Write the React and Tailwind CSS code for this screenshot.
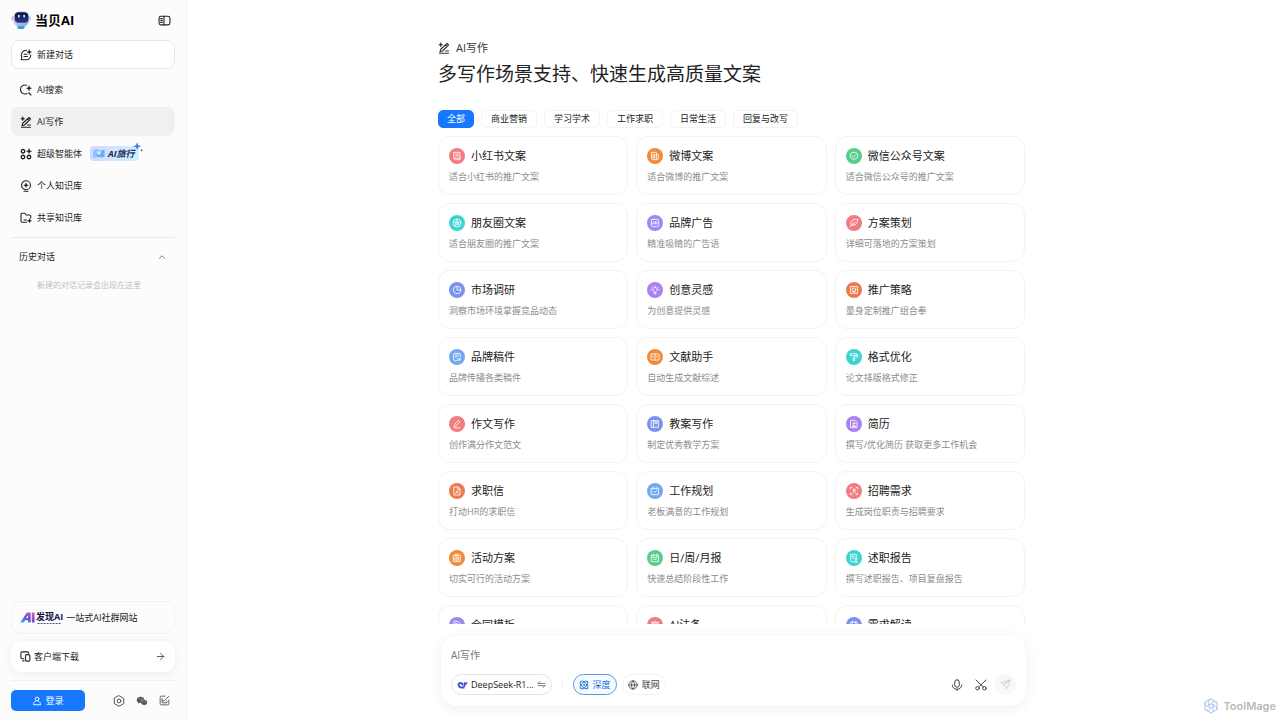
import React, { useState } from 'react';
import { ArrowRight, ChevronUp, Globe } from 'lucide-react';
import { AiFillWechat } from 'react-icons/ai';

const Svg = ({ className, children, width = 1.6 }) => (
  <svg
    viewBox="0 0 24 24"
    className={className}
    fill="none"
    stroke="currentColor"
    strokeWidth={width}
    strokeLinecap="round"
    strokeLinejoin="round"
    aria-hidden="true"
  >
    {children}
  </svg>
);

const ChatIcon = () => (
  <Svg className="size-3 shrink-0" width={2.2}>
    <path d="M13 2.5A9.6 9.6 0 0 0 3.6 16L2.5 21.5h9.8A9.4 9.4 0 0 0 21.5 12" />
    <path d="M8 10.5h6M8 15h7" />
    <path d="M18.5 1l1.6 3.6L23.5 6l-3.4 1.4-1.6 3.6-1.600-3.600L13.500 6l3.400-1.400z" fill="currentColor" strokeWidth="0.5" />
  </Svg>
);

const SearchIcon = () => (
  <Svg className="size-3 shrink-0" width={2.2}>
    <path d="M13 2.500a9 9 0 1 0 1 16.500M17.500 17.500l4.500 4.500" />
    <path d="M18 3l1.600 3.900L23.500 8.500l-3.900 1.600L18 14l-1.600-3.900-3.900-1.600 3.900-1.600z" fill="currentColor" strokeWidth="0.5" />
  </Svg>
);

const WriteIcon = () => (
  <Svg className="size-3 shrink-0" width={2.2}>
    <path d="M18 3l3 3L9 18l-5 1.500L5.500 14.500zM15 6l3 3M3 22.500h18M15 18h6" />
    <path d="M5.500 1l1.400 3.100L10 5.500 6.900 6.900 5.500 10 4.100 6.900 1 5.500l3.100-1.400z" fill="currentColor" strokeWidth="0.5" />
  </Svg>
);

const AgentIcon = () => (
  <Svg className="size-3 shrink-0" width={2.6}>
    <circle cx="6" cy="6.500" r="3.500" />
    <circle cx="6" cy="18" r="3.500" />
    <circle cx="18" cy="18" r="3.500" />
    <path d="M18 1l1.700 3.800 3.800 1.700-3.800 1.700L18 12l-1.700-3.800-3.800-1.700 3.800-1.700z" fill="currentColor" strokeWidth="0.5" />
  </Svg>
);

const PersonalIcon = () => (
  <Svg className="size-3 shrink-0" width={2.2}>
    <circle cx="12" cy="10.500" r="9" />
    <path d="M8 22.500h8" />
    <path d="M12 5.500l1.500 3.500 3.500 1.500-3.500 1.500L12 15.500 10.500 12 7 10.500 10.500 9z" fill="currentColor" strokeWidth="0.5" />
  </Svg>
);

const SharedIcon = () => (
  <Svg className="size-3 shrink-0" width={2.2}>
    <path d="M13 20.500H4.500a2.500 2.500 0 0 1-2.500-2.500V5a2.500 2.500 0 0 1 2.500-2.500h5l3 3.500H19a2.500 2.500 0 0 1 2.500 2.500V12M8 16h5" />
    <path d="M19 13l1.300 3.200 3.200 1.300-3.200 1.300L19 22l-1.300-3.200-3.200-1.300 3.200-1.300z" fill="currentColor" strokeWidth="0.5" />
  </Svg>
);

const RobotLogo = () => (
  <svg viewBox="0 0 60 54" className="h-[18px] w-5 shrink-0" aria-hidden="true">
    <defs>
      <linearGradient id="shell" x1="0" y1="0" x2="1" y2="1">
        <stop offset="0" stopColor="#e3e7f6" />
        <stop offset="1" stopColor="#929dca" />
      </linearGradient>
      <linearGradient id="visor" x1="0" y1="0" x2="0" y2="1">
        <stop offset="0" stopColor="#0d1644" />
        <stop offset="1" stopColor="#22398c" />
      </linearGradient>
    </defs>
    <path d="M14 38h34l-6 12q-11 6-22 0z" fill="#c7d0ea" />
    <path d="M18 47q12-6 24 0l-4 7H22z" fill="#2ea6dc" />
    <ellipse cx="5" cy="22" rx="4" ry="7" fill="#b9c1de" />
    <ellipse cx="56" cy="22" rx="4" ry="7" fill="#c9cfe6" />
    <rect x="6" y="1" width="49" height="44" rx="19" fill="url(#shell)" />
    <rect x="11" y="4" width="41" height="31" rx="12" fill="url(#visor)" />
    <rect x="21" y="11" width="5" height="9" rx="2.500" fill="#e9f2ff" />
    <rect x="37" y="11" width="5" height="9" rx="2.500" fill="#e9f2ff" />
  </svg>
);

const WhaleIcon = () => (
  <svg viewBox="0 0 32 24" className="h-2 w-[11px] shrink-0" aria-hidden="true">
    <path
      d="M1 10C1 5 6 2 11 3c4 .6 6 3 9 5 1-1 .6-4 1.500-6 1.500 2 3 3 5 2.500C28 4 29.500 3 31 3c0 5-2 8-5.500 9-.5 4-2.500 6.500-4.500 8l2 2c-4 1.500-8 .5-11 .5C5 22 1 17 1 10z"
      fill="#4358dc"
    />
    <path d="M7 9c4-1 8 4 11 8-5 1-11-2-11-8z" fill="#fff" />
    <circle cx="19" cy="12.500" r="1.800" fill="#fff" />
  </svg>
);

const glyphs = {
  note: <path d="M7.500 6.500h9v11h-8a1.500 1.500 0 0 1-1-1.500zM7.500 15h9M10 9.200h4M10 11.700h4" />,
  news: <path d="M7 6.500h7v11H8.500A1.500 1.500 0 0 1 7 16zM14 10h3v6a1.500 1.500 0 0 1-3 0M9.500 9.500h2v5.500h-2z" />,
  verified: (
    <>
      <path d="M12 6l1.700 1.200 2.100-.1.600 2 1.600 1.300-.7 2 .1 2-2 .8-1.200 1.700-2.200-.6-2.200.6-1.200-1.700-2-.8.100-2-.7-2 1.600-1.300.6-2 2.100.1z" />
      <path d="M9.700 12l1.700 1.600 3-3.100" />
    </>
  ),
  aperture: (
    <>
      <circle cx="12" cy="12" r="5.800" />
      <circle cx="12" cy="12" r="2" />
      <path d="M12 10V6.200M13.900 11.400l3.500-1.500M13.200 13.600l2.300 3M10.800 13.600l-2.300 3M10.100 11.400L6.600 9.900" />
    </>
  ),
  ad: (
    <>
      <rect x="6.500" y="6.500" width="11" height="11" rx="1.500" />
      <path d="M8.500 13.500l1.400-3.300 1.400 3.300M13 10.200v3.300h.8c2.300 0 2.300-3.300 0-3.300z" />
    </>
  ),
  leaf: <path d="M17.500 7c-5-1.500-10 .5-10.500 4.500-.2 2 .5 3.500 2 4C14 16.500 17.500 12 17.500 7zM6.500 17.500c2-3 4-5 7-6.500M10 13.500l3.500.5" />,
  pie: (
    <>
      <circle cx="12" cy="12" r="5.500" />
      <path d="M12 6.500V12h5.500" />
    </>
  ),
  bulb: <path d="M10.500 15.500v-1.300a3.200 3.200 0 1 1 3 0v1.300zM10.800 17.800h2.400M12 6.500V5.800M7 11.500H5.800M18.200 11.500H17M8.300 8.200l-.8-.7M15.700 8.200l.8-.7" />,
  target: (
    <>
      <path d="M9 17.200H6.800V6.800h10.400v10.400H15" />
      <circle cx="12" cy="11.500" r="2.600" />
      <path d="M10.600 14v3.200h2.800V14" />
    </>
  ),
  draft: (
    <>
      <path d="M11.500 17.500H8.500a1.500 1.500 0 0 1-1.500-1.500V8a1.500 1.500 0 0 1 1.500-1.500h7A1.500 1.500 0 0 1 17 8v4M9.500 9.200h5M9.500 11.700h2.500" />
      <circle cx="14.800" cy="15.500" r="1.800" />
    </>
  ),
  book: <path d="M12 7.500v9M7 7.500h10a1 1 0 0 1 1 1v7a1 1 0 0 1-1 1h-4l-1 .8-1-.8H7a1 1 0 0 1-1-1v-7a1 1 0 0 1 1-1zM8.300 11.500h1.500M14.200 11.500h1.500" />,
  roller: <path d="M7 7h8.500v3H7zM15.500 8.300h2V12H12v2M11.200 14h1.700v3.500h-1.700z" />,
  pen: <path d="M14.500 6.800l2 2-6 6.200-2.700.7.700-2.700zM7.500 17.700h9" />,
  plan: <path d="M7 7h10v10H7zM9.700 7v10M12 7v4.500l1.500-1 1.500 1V7" />,
  resume: (
    <>
      <path d="M7.500 6.500h6l3 3v8h-9z" />
      <circle cx="12" cy="11" r="1.300" />
      <path d="M9.700 15c.5-2 4-2 4.600 0z" />
    </>
  ),
  letter: <path d="M7.800 6h5.500l3.200 3.200V18H7.800zM13 6v3.500h3.500M10.300 15.500l1.700-4 1.700 4" />,
  schedule: <path d="M6.800 8h10.400v9.500H6.800zM9 6.300v2.500M15 6.300v2.500M9.500 12.800l1.700 1.700 3.300-3.200" />,
  scan: (
    <>
      <path d="M6.500 9V6.500H9M15 6.500h2.500V9M17.500 15v2.500H15M9 17.500H6.500V15" />
      <circle cx="12" cy="10.500" r="1.600" />
      <path d="M9 15.300c.6-2.800 5.400-2.800 6 0" />
    </>
  ),
  board: <path d="M7 8h10v9.500H7zM10 6.300h4V8h-4zM9.500 10.800h5v4.400h-5zM12 10.800v4.400" />,
  calendar: <path d="M6.800 7.800h10.400v9.700H6.800zM6.800 11h10.400M9.500 6.200v2.500M14.500 6.200v2.500M10 14h4" />,
  report: (
    <>
      <path d="M11 17.500H8.500A1.500 1.500 0 0 1 7 16V6.500h8.500v4M9.200 9.300h4M9.200 12h2.500" />
      <circle cx="14.800" cy="13.200" r="1.400" />
      <path d="M12.500 17.700c.5-2.600 4.200-2.600 4.700 0z" />
    </>
  ),
  contract: <path d="M12 17.500H7.500v-11h5.500l3 3V12M9.500 10h3M9.500 12.500h3M14 14.500l3 2-2 1.500" />,
  law: <path d="M6.800 8h10.400M12 6.200v11M9 17.500h6M8.500 8l-2 5h4zM15.500 8l-2 5h4z" />,
  demand: <path d="M7.500 8h9v9.500h-9zM9.500 6.300v3M14.500 6.300v3M10 12h4M10 14.500h4" />,
};

const cards = [
  { title: '小红书文案', desc: '适合小红书的推广文案', icon: 'note', color: 'bg-[#f27b80]' },
  { title: '微博文案', desc: '适合微博的推广文案', icon: 'news', color: 'bg-[#f18a3a]' },
  { title: '微信公众号文案', desc: '适合微信公众号的推广文案', icon: 'verified', color: 'bg-[#57cc8b]' },
  { title: '朋友圈文案', desc: '适合朋友圈的推广文案', icon: 'aperture', color: 'bg-[#3cd4d2]' },
  { title: '品牌广告', desc: '精准吸睛的广告语', icon: 'ad', color: 'bg-[#9a8af0]' },
  { title: '方案策划', desc: '详细可落地的方案策划', icon: 'leaf', color: 'bg-[#f27b80]' },
  { title: '市场调研', desc: '洞察市场环境掌握竞品动态', icon: 'pie', color: 'bg-[#7b93ec]' },
  { title: '创意灵感', desc: '为创意提供灵感', icon: 'bulb', color: 'bg-[#ab80f0]' },
  { title: '推广策略', desc: '量身定制推广组合拳', icon: 'target', color: 'bg-[#ee7a4f]' },
  { title: '品牌稿件', desc: '品牌传播各类稿件', icon: 'draft', color: 'bg-[#73a8f0]' },
  { title: '文献助手', desc: '自动生成文献综述', icon: 'book', color: 'bg-[#f18a3a]' },
  { title: '格式优化', desc: '论文排版格式修正', icon: 'roller', color: 'bg-[#3cd4d2]' },
  { title: '作文写作', desc: '创作满分作文范文', icon: 'pen', color: 'bg-[#f27b80]' },
  { title: '教案写作', desc: '制定优秀教学方案', icon: 'plan', color: 'bg-[#7b93ec]' },
  { title: '简历', desc: '撰写/优化简历 获取更多工作机会', icon: 'resume', color: 'bg-[#ab80f0]' },
  { title: '求职信', desc: '打动HR的求职信', icon: 'letter', color: 'bg-[#ee7a4f]' },
  { title: '工作规划', desc: '老板满意的工作规划', icon: 'schedule', color: 'bg-[#73a8f0]' },
  { title: '招聘需求', desc: '生成岗位职责与招聘要求', icon: 'scan', color: 'bg-[#f27b80]' },
  { title: '活动方案', desc: '切实可行的活动方案', icon: 'board', color: 'bg-[#f18a3a]' },
  { title: '日/周/月报', desc: '快速总结阶段性工作', icon: 'calendar', color: 'bg-[#57cc8b]' },
  { title: '述职报告', desc: '撰写述职报告、项目复盘报告', icon: 'report', color: 'bg-[#3cd4d2]' },
  { title: '合同模板', icon: 'contract', color: 'bg-[#9a8af0]' },
  { title: 'AI法条', icon: 'law', color: 'bg-[#f27b80]' },
  { title: '需求解读', icon: 'demand', color: 'bg-[#7b93ec]' },
];

const navItems = [
  { label: 'AI搜索', icon: SearchIcon },
  { label: 'AI写作', icon: WriteIcon, active: true },
  { label: '超级智能体', icon: AgentIcon, badge: true },
  { label: '个人知识库', icon: PersonalIcon },
  { label: '共享知识库', icon: SharedIcon },
];

const tabs = ['全部', '商业营销', '学习学术', '工作求职', '日常生活', '回复与改写'];

const TravelBadge = () => (
  <span className="relative ml-[3px] flex h-[15px] items-center gap-[3px] rounded bg-gradient-to-r from-[#d3d8fd] to-[#cbf3fd] pr-1 pl-[3px] text-[9px] font-bold italic text-[#1d2756]">
    <svg viewBox="0 0 24 18" className="h-[9px] w-3" aria-hidden="true">
      <path d="M1 2l7-1 8 2 7-2v15l-7 1-8-1-7 1z" fill="#6aaef8" />
      <path d="M1 2l7-1v15l-7 1z" fill="#8ac4fc" />
      <path d="M12 12L8 7a4 4 0 1 1 8 0z" fill="#fff" />
      <circle cx="12" cy="6" r="1.500" fill="#5a8df0" />
    </svg>
    AI旅行
    <svg viewBox="0 0 24 24" className="absolute -top-1 -right-1 size-[10px]" fill="#4c74e0" aria-hidden="true">
      <path d="M10 0l2.500 7.500L20 10l-7.500 2.500L10 20l-2.500-7.500L0 10l7.500-2.500z" />
      <circle cx="21" cy="20" r="2.500" />
    </svg>
  </span>
);

const Sidebar = () => (
  <aside className="flex w-[187px] shrink-0 flex-col border-r border-[#f3f3f3] bg-[#fcfcfc] px-[11px] pt-2.5 pb-[9px]">
    <div className="flex h-5 items-center gap-1">
      <RobotLogo />
      <span className="text-[13px] font-bold text-black">当贝AI</span>
      <button type="button" aria-label="收起侧边栏" className="mr-1 ml-auto text-[#222]">
        <Svg className="size-[13px]" width={2}>
          <rect x="2" y="4" width="20" height="16" rx="3.500" />
          <path d="M11 4v16M5 8.500h3M5 12h3M5 15.500h3" />
        </Svg>
      </button>
    </div>

    <button
      type="button"
      className="mt-2.5 flex h-[29px] shrink-0 items-center gap-[5px] rounded-lg border border-[#e8e8e8] bg-white px-2 text-[#222]"
    >
      <ChatIcon />
      新建对话
    </button>

    <nav className="mt-1.5 flex flex-col gap-[3px]">
      {navItems.map(({ label, icon: Icon, active, badge }) => (
        <a
          key={label}
          href="#"
          className={`flex h-[29px] items-center gap-[5px] rounded-lg px-[9px] text-[#222] ${active ? 'bg-[#f0f0f0]' : ''}`}
        >
          <Icon />
          {label}
          {badge && <TravelBadge />}
        </a>
      ))}
    </nav>

    <hr className="mt-[5px] border-[#ebebeb]" />
    <button type="button" className="mt-2.5 flex h-[18px] items-center justify-between px-2 text-[#222]">
      历史对话
      <ChevronUp className="size-[10px] text-[#666]" strokeWidth={2} />
    </button>
    <p className="mt-3 pl-[26px] text-[8px] leading-[14px] text-[#c0c0c0]">新建的对话记录会出现在这里</p>

    <a
      href="#"
      className="mt-auto flex h-[33px] shrink-0 items-center rounded-[10px] border border-[#f2f2f2] px-2 text-[#222]"
    >
      <svg viewBox="0 0 28 20" className="h-[11px] w-4 shrink-0" aria-hidden="true">
        <defs>
          <linearGradient id="mark" x1="0" y1="1" x2="1" y2="0">
            <stop offset="0" stopColor="#28b8f2" />
            <stop offset="0.500" stopColor="#6a4be0" />
            <stop offset="1" stopColor="#e85bb0" />
          </linearGradient>
        </defs>
        <path d="M0 19L12 1h7v18h-5v-4H9l-3 4zM14 11V6l-3.500 5zM21 1h5v18h-5z" fill="url(#mark)" fillRule="evenodd" />
      </svg>
      <span className="flex flex-col gap-px">
        <span className="text-[9px] leading-[10px] font-bold text-[#15123f]">发现AI</span>
        <svg viewBox="0 0 26 1" className="h-px w-full" aria-hidden="true">
          <path d="M1 .5h24" stroke="#55537a" strokeDasharray="2 1" />
        </svg>
      </span>
      <span className="ml-[3px]">一站式AI社群网站</span>
    </a>

    <button
      type="button"
      className="mt-[7px] flex h-[31px] shrink-0 items-center gap-[3px] rounded-[10px] bg-white px-[9px] text-[#222] shadow-[0_2px_10px_rgba(0,0,0,0.06)]"
    >
      <Svg className="size-[11px] shrink-0" width={2.4}>
        <path d="M8 17H5a3 3 0 0 1-3-3V5a3 3 0 0 1 3-3h11a3 3 0 0 1 3 3M6 21.500h3" />
        <rect x="12" y="8" width="9.500" height="14" rx="2.500" />
      </Svg>
      客户端下载
      <ArrowRight className="ml-auto size-[11px] text-[#444]" strokeWidth={1.8} />
    </button>

    <hr className="mt-2 border-[#f0f0f0]" />
    <div className="mt-[9px] flex shrink-0 items-center">
      <button
        type="button"
        className="flex h-[21px] w-[74px] items-center justify-center gap-[3px] rounded-[5px] bg-[#1677ff] text-white"
      >
        <Svg className="size-[10px]" width={2.2}>
          <circle cx="12" cy="7" r="4.500" />
          <path d="M8.500 12.500c-3 1-5 4-5 8.500h17c0-4.500-2-7.500-5-8.500" />
        </Svg>
        登录
      </button>
      <div className="ml-auto flex items-center gap-[11px] pr-[5px] text-[#555]">
        <button type="button" aria-label="设置">
          <Svg className="size-3" width={2}>
            <path d="M12 1.500l9.500 5.300v10.400L12 22.500l-9.500-5.300V6.800z" />
            <circle cx="12" cy="12" r="3.800" />
          </Svg>
        </button>
        <button type="button" aria-label="微信">
          <AiFillWechat className="size-3" />
        </button>
        <button type="button" aria-label="反馈">
          <Svg className="size-[11px]" width={2}>
            <path d="M13 2.500H5A2.500 2.500 0 0 0 2.500 5v14A2.500 2.500 0 0 0 5 21.500h14a2.500 2.500 0 0 0 2.500-2.500v-8M21.500 2.500l-9 9M7 8v9h10v-4M7 12.500h3" />
          </Svg>
        </button>
      </div>
    </div>
  </aside>
);

const Card = ({ title, desc, icon, color }) => (
  <button
    type="button"
    className="flex min-h-[59px] flex-col items-start rounded-xl border border-[#f3f3f3] bg-white px-2.5 pt-[11px] pb-2.5 text-left"
  >
    <span className="flex h-4 items-center gap-1.5 text-[11px] text-[#222]">
      <span className={`size-4 shrink-0 rounded-full text-white/90 ${color}`}>
        <Svg className="size-4" width={1.4}>{glyphs[icon]}</Svg>
      </span>
      {title}
    </span>
    {desc && <span className="mt-1.5 leading-[14px] text-[#8c8c8c]">{desc}</span>}
  </button>
);

const Composer = () => {
  const [text, setText] = useState('');
  const [deep, setDeep] = useState(true);

  return (
    <form
      onSubmit={(e) => e.preventDefault()}
      className="mx-[3px] mt-3 mb-3.5 rounded-2xl bg-white px-2.5 pt-3 pb-[11px] shadow-[0_2px_14px_rgba(0,0,0,0.07)]"
    >
      <textarea
        aria-label="AI写作"
        rows={1}
        value={text}
        onChange={(e) => setText(e.target.value)}
        placeholder="AI写作"
        className="mb-[11px] block h-[15px] w-full resize-none text-[10px] leading-[15px] text-[#333] outline-none placeholder:text-[#777]"
      />
      <div className="flex items-center">
        <button type="button" className="flex h-[21px] items-center gap-[3px] rounded-full border border-[#e4e4e4] px-[5px] text-[#222]">
          <WhaleIcon />
          DeepSeek-R1...
          <Svg className="size-[9px] text-[#555]" width={2}>
            <path d="M3 9h18M3 9l5-5M21 15H3M21 15l-5 5" />
          </Svg>
        </button>
        <span className="mx-[10px] h-2 w-px bg-[#ececec]" />
        <button
          type="button"
          aria-pressed={deep}
          onClick={() => setDeep(!deep)}
          className={`flex h-[21px] items-center gap-1 rounded-full border px-[5px] ${deep ? 'border-[#5a96dc] bg-[#f7fbff] text-[#1a6ed8]' : 'border-[#f0f0f0] text-[#444]'}`}
        >
          <Svg className="size-[10px]" width={2.2}>
            <ellipse cx="12" cy="12" rx="12" ry="6" transform="rotate(45 12 12)" />
            <ellipse cx="12" cy="12" rx="12" ry="6" transform="rotate(-45 12 12)" />
            <circle cx="12" cy="12" r="1.500" />
          </Svg>
          深度
        </button>
        <button type="button" className="ml-[5px] flex h-[21px] items-center gap-1 rounded-full border border-[#f3f3f3] px-[5px] text-[#444]">
          <Globe className="size-[10px]" strokeWidth={2} />
          联网
        </button>
        <div className="ml-auto flex items-center gap-3 text-[#444]">
          <button type="button" aria-label="语音输入">
            <Svg className="size-3" width={2}>
              <rect x="7.500" y="1.500" width="9" height="15" rx="4.500" />
              <path d="M2.500 12c0 5 4 8.500 9.500 8.500s9.500-3.500 9.500-8.500M12 20.500V23" />
            </Svg>
          </button>
          <button type="button" aria-label="截图">
            <Svg className="size-3" width={2}>
              <path d="M2 2l14.500 14M22 2L7.500 16" />
              <circle cx="5" cy="18.500" r="3.500" />
              <circle cx="19" cy="18.500" r="3.500" />
            </Svg>
          </button>
          <button
            type="submit"
            aria-label="发送"
            className="-ml-1 flex size-[21px] items-center justify-center rounded-full bg-[#f8f8f8] text-[#cfcfcf]"
          >
            <Svg className="size-[11px]" width={2}>
              <path d="M22 2L2 8.500l6.500 4.500L22 2l-7 19-6.500-8z" />
            </Svg>
          </button>
        </div>
      </div>
    </form>
  );
};

const App = () => {
  const [tab, setTab] = useState('全部');

  return (
    <div className="relative flex h-screen bg-white font-['Open_Sans','Noto_Sans_CJK_SC',sans-serif] text-[9px] leading-[14px]">
      <Sidebar />

      <main className="flex min-w-0 flex-1 flex-col items-center">
        <div className="flex min-h-0 w-full max-w-[591px] flex-1 flex-col">
          <header className="pt-10">
            <p className="flex h-4 items-center gap-1.5 text-[11px] text-[#333]">
              <WriteIcon />
              AI写作
            </p>
            <h1 className="mt-1 text-[19px] leading-[28px] text-[#222]">多写作场景支持、快速生成高质量文案</h1>
          </header>

          <div className="mt-[22px] flex gap-[7px]">
            {tabs.map((name) => (
              <button
                key={name}
                type="button"
                onClick={() => setTab(name)}
                className={`h-[18px] rounded-[5px] border leading-4 ${
                  tab === name ? 'border-[#1677ff] bg-[#1677ff] px-2 text-white' : 'border-[#f3f3f3] px-[9px] text-[#222]'
                }`}
              >
                {name}
              </button>
            ))}
          </div>

          <section className="mt-2 min-h-0 flex-1 overflow-hidden pr-1">
            <div className="grid grid-cols-3 gap-2">
              {cards.map((card) => (
                <Card key={card.title} {...card} />
              ))}
            </div>
          </section>

          <Composer />
        </div>
      </main>

      <div className="pointer-events-none absolute right-1 bottom-1.5 flex items-center gap-1 font-['Inter',sans-serif] text-[11px] font-semibold text-[#b9b9b9]">
        <Svg className="size-4 text-[#a9c6ee]" width={1.5}>
          <path d="M12 1.500l9 5.200v10.600l-9 5.200-9-5.200V6.700z" />
          <circle cx="12" cy="12" r="3" />
          <path d="M12 1.500c-4 2-5 6-3 10M21 6.700c-3.800-2.400-7.700-1.200-10 2.500M21 17.300c.2-4.500-2.800-7.300-7-7.300M12 22.500c4-2 5-6 3-10M3 17.300c3.800 2.400 7.700 1.200 10-2.500M3 6.700c-.2 4.500 2.800 7.300 7 7.300" />
        </Svg>
        ToolMage
      </div>
    </div>
  );
};

export default App;
